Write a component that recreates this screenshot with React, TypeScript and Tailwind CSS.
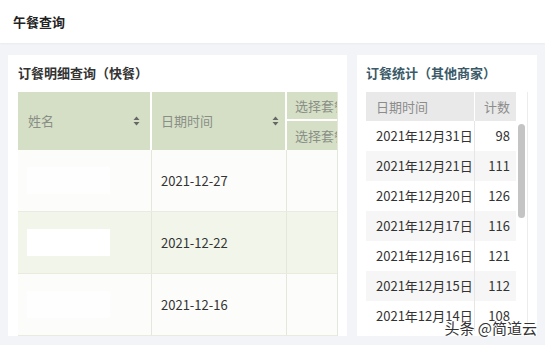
import React from 'react';

const font = { fontFamily: '"Noto Sans CJK SC", "Noto Sans", sans-serif' };

const detailRows = [
  { date: '2021-12-27', box: 'bg-white/70' },
  { date: '2021-12-22', box: 'bg-white' },
  { date: '2021-12-16', box: 'bg-white/70' },
];

const stats = [
  ['2021年12月31日', 98],
  ['2021年12月21日', 111],
  ['2021年12月20日', 126],
  ['2021年12月17日', 116],
  ['2021年12月16日', 121],
  ['2021年12月15日', 112],
  ['2021年12月14日', 108],
];

function SortIcon() {
  return (
    <svg width="7" height="10" viewBox="0 0 7 10" className="text-[#666]">
      <path d="M3.5 0.5 L6.5 4 L0.5 4 Z" fill="currentColor" />
      <path d="M3.5 9.5 L6.5 6 L0.5 6 Z" fill="currentColor" />
    </svg>
  );
}

export default function App() {
  return (
    <div className="w-[545px] h-[345px] bg-[#f3f4f8] overflow-hidden relative text-[13px]" style={font}>
      <div className="h-[43px] bg-white flex items-center px-[13px] shadow-[0_1px_2px_rgba(0,0,0,0.04)]">
        <h1 className="text-[13px] font-bold text-[#222]">午餐查询</h1>
      </div>

      <div className="flex gap-[10px] pl-[8px] pt-[12px]">
        {/* left card */}
        <div className="w-[339px] h-[281px] bg-white overflow-hidden px-[10px] pt-[9px]">
          <h2 className="text-[13px] font-bold text-[#333] leading-[18px] mb-[10px]">订餐明细查询（快餐）</h2>
          <div className="w-[320px] overflow-hidden border-r border-[#e4e8dc]">
            <div className="flex w-[400px] h-[58px] bg-[#d5dfc6] text-[#8a8f86]">
              <div className="w-[134px] flex items-center justify-between pl-[10px] pr-[10px] border-r-2 border-white">
                <span>姓名</span>
                <SortIcon />
              </div>
              <div className="w-[135px] flex items-center justify-between pl-[9px] pr-[6px] border-r-2 border-white">
                <span>日期时间</span>
                <SortIcon />
              </div>
              <div className="flex-1 flex flex-col">
                <div className="h-[29px] flex items-center pl-[8px] border-b-2 border-white">选择套餐</div>
                <div className="flex-1 flex items-center pl-[8px]">选择套餐</div>
              </div>
            </div>
            {detailRows.map((r, i) => (
              <div
                key={r.date}
                className={`flex w-[400px] h-[62px] border-b border-[#e8ebe0] ${i % 2 === 1 ? 'bg-[#f1f5ea]' : 'bg-[#fcfcfa]'}`}
              >
                <div className="w-[134px] flex items-center pl-[9px] border-r border-[#e4e8dc]">
                  <div className={`w-[83px] h-[27px] ${r.box}`} />
                </div>
                <div className="w-[135px] flex items-center pl-[9px] text-[#333] border-r border-[#e4e8dc]">
                  {r.date}
                </div>
                <div className="flex-1" />
              </div>
            ))}
          </div>
        </div>

        {/* right card */}
        <div className="w-[180px] h-[281px] bg-white overflow-hidden pl-[9px] pt-[9px]">
          <h2 className="text-[13px] font-bold text-[#3a5a68] leading-[18px] mb-[10px]">订餐统计（其他商家）</h2>
          <div className="w-[162px] flex border-r border-[#ececec]">
            <div className="w-[150px]">
              <div className="flex h-[29px] text-[#8c8c8c]">
                <div className="w-[108px] bg-[#e9e9e9] flex items-center pl-[10px] mr-[1px]">日期时间</div>
                <div className="flex-1 bg-[#e9e9e9] flex items-center justify-end pr-[6px]">计数</div>
              </div>
              {stats.map(([d, n], i) => (
                <div key={d} className={`flex h-[30px] text-[#333] ${i % 2 === 1 ? 'bg-[#f6f6f6]' : 'bg-white'}`}>
                  <div className="w-[109px] flex items-center pl-[10px] border-r border-[#e6e6e6]">{d}</div>
                  <div className="flex-1 flex items-center justify-end pr-[6px]">{n}</div>
                </div>
              ))}
            </div>
            <div className="flex-1 pt-[32px] flex justify-center">
              <div className="w-[7px] h-[94px] rounded-full bg-[#c4c4c4]" />
            </div>
          </div>
        </div>
      </div>

      <div className="absolute right-[8px] bottom-[6px] text-[15px] text-[#333] [text-shadow:0_0_2px_#fff,0_0_2px_#fff,0_0_3px_#fff]">
        头条 @简道云
      </div>
    </div>
  );
}
